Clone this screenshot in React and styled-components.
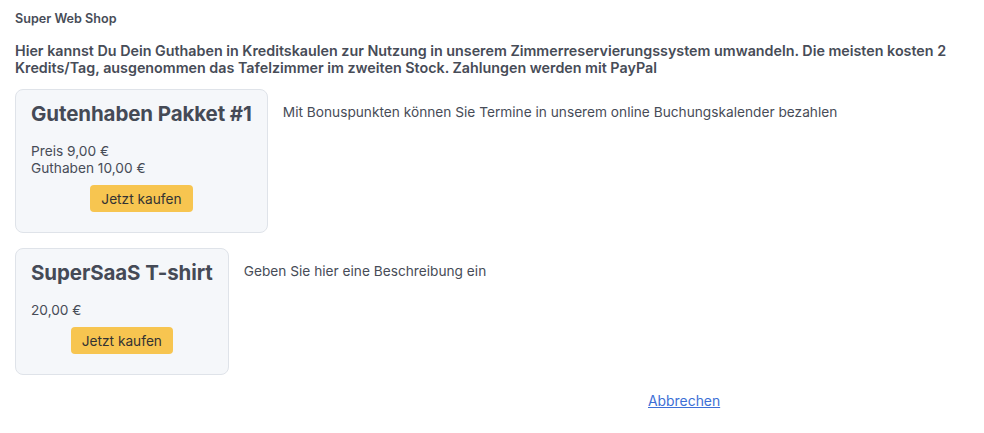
import React from 'react';
import styled, { createGlobalStyle } from 'styled-components';

const GlobalStyle = createGlobalStyle`
  body {
    margin: 0;
    background: #fff;
    font-family: Inter, "Noto Sans", sans-serif;
    color: #474c57;
  }
`;

const Page = styled.div`
  padding: 10px 15px 20px 15px;
`;

const ShopTitle = styled.div`
  font-size: 12.6px;
  font-weight: 600;
  line-height: 17px;
  margin-bottom: 15px;
`;

const Intro = styled.p`
  margin: 0 0 13px 0;
  font-size: 14.3px;
  font-weight: 600;
  line-height: 17px;
`;

const ProductList = styled.div`
  display: flex;
  flex-direction: column;
  gap: 15px;
`;

const ProductRow = styled.div`
  display: flex;
  align-items: flex-start;
  gap: 15px;
`;

const Card = styled.div`
  flex: 0 0 auto;
  background: #f5f7fa;
  border: 1px solid #dfe3e9;
  border-radius: 8px;
  padding: 12px 15px 20px 15px;
`;

const CardTitle = styled.h2`
  margin: 0 0 17px 0;
  font-size: 20.5px;
  font-weight: 700;
  letter-spacing: -0.1px;
  line-height: 24px;
  color: #454a56;
  white-space: nowrap;
`;

const PriceLine = styled.div`
  font-size: 13.7px;
  line-height: 17px;
`;

const BuyButton = styled.button`
  display: block;
  margin: 8px auto 0 auto;
  height: 27px;
  padding: 0 11px;
  border: none;
  border-radius: 4px;
  background: #f7c550;
  color: #333;
  font-family: inherit;
  font-size: 13.7px;
  cursor: pointer;
`;

const Description = styled.div`
  padding-top: 15px;
  font-size: 13.7px;
  line-height: 17px;
`;

const Footer = styled.div`
  padding: 15px 0 0 633px;
`;

const CancelLink = styled.a`
  font-size: 13.9px;
  line-height: 17px;
  color: #3d6fd6;
  text-decoration: underline;
`;

const products = [
  {
    title: 'Gutenhaben Pakket #1',
    lines: ['Preis 9,00 €', 'Guthaben 10,00 €'],
    description: 'Mit Bonuspunkten können Sie Termine in unserem online Buchungskalender bezahlen',
  },
  {
    title: 'SuperSaaS T-shirt',
    lines: ['20,00 €'],
    description: 'Geben Sie hier eine Beschreibung ein',
  },
];

export default function App() {
  return (
    <>
      <GlobalStyle />
      <Page>
        <ShopTitle>Super Web Shop</ShopTitle>
        <Intro>
          Hier kannst Du Dein Guthaben in Kreditskaulen zur Nutzung in unserem Zimmerreservierungssystem umwandeln. Die meisten kosten 2
          <br />
          Kredits/Tag, ausgenommen das Tafelzimmer im zweiten Stock. Zahlungen werden mit PayPal
        </Intro>
        <ProductList>
          {products.map((p) => (
            <ProductRow key={p.title}>
              <Card>
                <CardTitle>{p.title}</CardTitle>
                {p.lines.map((l) => (
                  <PriceLine key={l}>{l}</PriceLine>
                ))}
                <BuyButton>Jetzt kaufen</BuyButton>
              </Card>
              <Description>{p.description}</Description>
            </ProductRow>
          ))}
        </ProductList>
        <Footer>
          <CancelLink href="#">Abbrechen</CancelLink>
        </Footer>
      </Page>
    </>
  );
}
